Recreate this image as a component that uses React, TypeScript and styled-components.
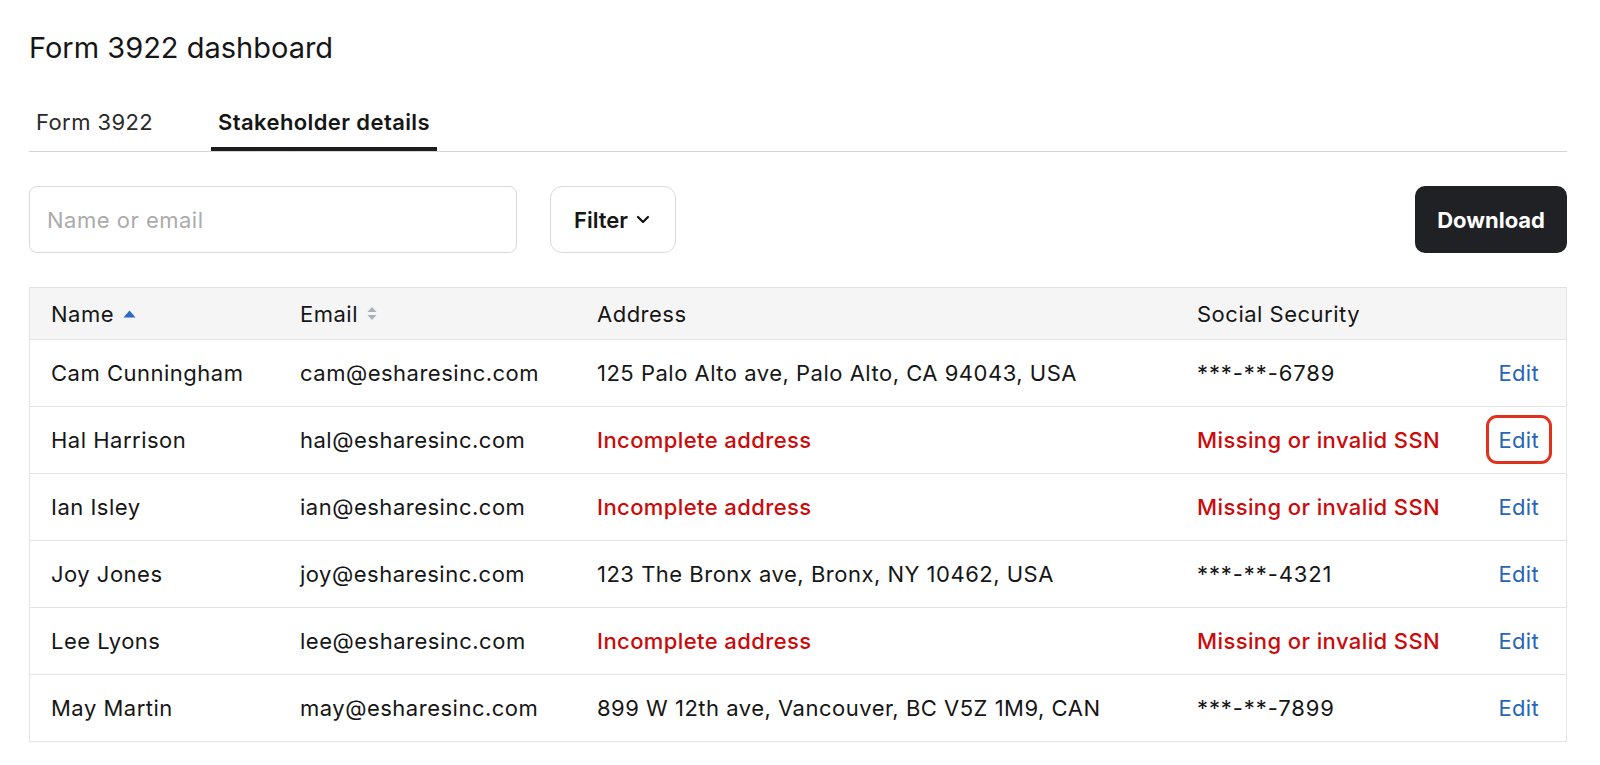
import React from 'react';
import styled, {createGlobalStyle, css} from 'styled-components';

interface IStakeholder {
    name: string;
    email: string;
    address?: string;
    ssn?: string;
    highlight?: boolean;
}

const stakeholders: IStakeholder[] = [
    {name: 'Cam Cunningham', email: 'cam@esharesinc.com', address: '125 Palo Alto ave, Palo Alto, CA 94043, USA', ssn: '***-**-6789'},
    {name: 'Hal Harrison', email: 'hal@esharesinc.com', highlight: true},
    {name: 'Ian Isley', email: 'ian@esharesinc.com'},
    {name: 'Joy Jones', email: 'joy@esharesinc.com', address: '123 The Bronx ave, Bronx, NY 10462, USA', ssn: '***-**-4321'},
    {name: 'Lee Lyons', email: 'lee@esharesinc.com'},
    {name: 'May Martin', email: 'may@esharesinc.com', address: '899 W 12th ave, Vancouver, BC V5Z 1M9, CAN', ssn: '***-**-7899'},
];

function App() {
    return (
        <Page>
            <GlobalStyle/>
            <Title>Form 3922 dashboard</Title>
            <Tabs>
                <Tab>Form 3922</Tab>
                <Tab active>Stakeholder details</Tab>
            </Tabs>
            <Toolbar>
                <Search placeholder="Name or email"/>
                <FilterButton>
                    Filter
                    <svg width="14" height="9" viewBox="0 0 14 9">
                        <path d="M2 2l5 5 5-5" fill="none" stroke="#111" strokeWidth="2.2" strokeLinecap="round" strokeLinejoin="round"/>
                    </svg>
                </FilterButton>
                <DownloadButton>Download</DownloadButton>
            </Toolbar>
            <Table>
                <HeadRow>
                    <Cell>
                        Name
                        <svg width="13" height="8" viewBox="0 0 13 8">
                            <path d="M6.5 0.5l6 7H0.5z" fill="#2b6ac4"/>
                        </svg>
                    </Cell>
                    <Cell>
                        Email
                        <svg width="10" height="15" viewBox="0 0 10 15">
                            <path d="M5 1l4.5 5H0.5z" fill="#a9b0bb"/>
                            <path d="M5 14l4.5-5H0.5z" fill="#a9b0bb"/>
                        </svg>
                    </Cell>
                    <Cell>Address</Cell>
                    <Cell>Social Security</Cell>
                    <Cell/>
                </HeadRow>
                {stakeholders.map((s: IStakeholder, index: number) =>
                    <Row key={index}>
                        <Cell>{s.name}</Cell>
                        <Cell>{s.email}</Cell>
                        {s.address
                            ? <Cell>{s.address}</Cell>
                            : <Cell error>Incomplete address</Cell>}
                        {s.ssn
                            ? <Cell mono>{s.ssn}</Cell>
                            : <Cell error>Missing or invalid SSN</Cell>}
                        <EditLink highlight={s.highlight}>Edit</EditLink>
                    </Row>
                )}
            </Table>
        </Page>
    );
}

const GlobalStyle = createGlobalStyle`
    body {
        margin: 0;
        background: #fff;
        font-family: Inter, "Noto Sans", sans-serif;
        color: #1a1a1a;
    }
`;

const Page = styled.div`
    padding: 30px 33px 0 29px;
`;

const Title = styled.h1`
    margin: 0;
    font-size: 29px;
    line-height: 36px;
    font-weight: 400;
    color: #161616;
`;

const Tabs = styled.div`
    display: flex;
    margin-top: 28px;
    border-bottom: 1px solid #d4d4d4;
`;

const Tab = styled.div<{active?: boolean}>`
    padding: 16px 7px 13px;
    margin-right: 51px;
    font-size: 22px;
    line-height: 24px;
    letter-spacing: 0.4px;
    border-bottom: 4px solid transparent;
    color: #2a2a2a;
    ${p => p.active && css`
        font-weight: 600;
        color: #161616;
        border-bottom-color: #1d1d1f;
    `}
`;

const Toolbar = styled.div`
    display: flex;
    align-items: center;
    gap: 33px;
    margin-top: 34px;
`;

const Search = styled.input`
    width: 488px;
    height: 67px;
    box-sizing: border-box;
    padding: 0 17px;
    border: 1px solid #d9d9d9;
    border-radius: 8px;
    font-family: inherit;
    font-size: 22px;
    letter-spacing: 0.5px;
    color: #222;
    outline: none;
    &::placeholder {
        color: #ababab;
    }
`;

const FilterButton = styled.button`
    display: flex;
    align-items: center;
    gap: 8px;
    height: 67px;
    box-sizing: border-box;
    padding: 0 25px 0 23px;
    background: #fff;
    border: 1px solid #d9d9d9;
    border-radius: 12px;
    font-family: inherit;
    font-size: 22px;
    font-weight: 600;
    color: #161616;
`;

const DownloadButton = styled.button`
    margin-left: auto;
    height: 67px;
    padding: 0 22px;
    background: #202124;
    border: none;
    border-radius: 10px;
    font-family: inherit;
    font-size: 22px;
    font-weight: 700;
    color: #fff;
`;

const Table = styled.div`
    margin-top: 34px;
    border: 1px solid #e3e3e3;
`;

const rowGrid = css`
    display: grid;
    grid-template-columns: 249px 297px 600px 1fr auto;
    align-items: center;
    padding: 0 27px 0 21px;
`;

const HeadRow = styled.div`
    ${rowGrid};
    height: 51px;
    background: #f5f5f5;
`;

const Row = styled.div`
    ${rowGrid};
    height: 66px;
    border-top: 1px solid #e3e3e3;
`;

const Cell = styled.div<{error?: boolean; mono?: boolean}>`
    display: flex;
    align-items: center;
    gap: 9px;
    font-size: 22px;
    letter-spacing: 0.5px;
    color: #161616;
    white-space: nowrap;
    ${p => p.mono && css`letter-spacing: 0.9px;`}
    ${p => p.error && css`
        color: #cc0a0a;
        font-weight: 500;
        letter-spacing: 0.4px;
    `}
`;

const EditLink = styled.a<{highlight?: boolean}>`
    position: relative;
    font-size: 22px;
    letter-spacing: 0.3px;
    color: #2765b8;
    cursor: pointer;
    ${p => p.highlight && css`
        &::after {
            content: '';
            position: absolute;
            inset: -12px -13px -11px -13px;
            border: 3px solid #e0311c;
            border-radius: 11px;
        }
    `}
`;

export default App;
